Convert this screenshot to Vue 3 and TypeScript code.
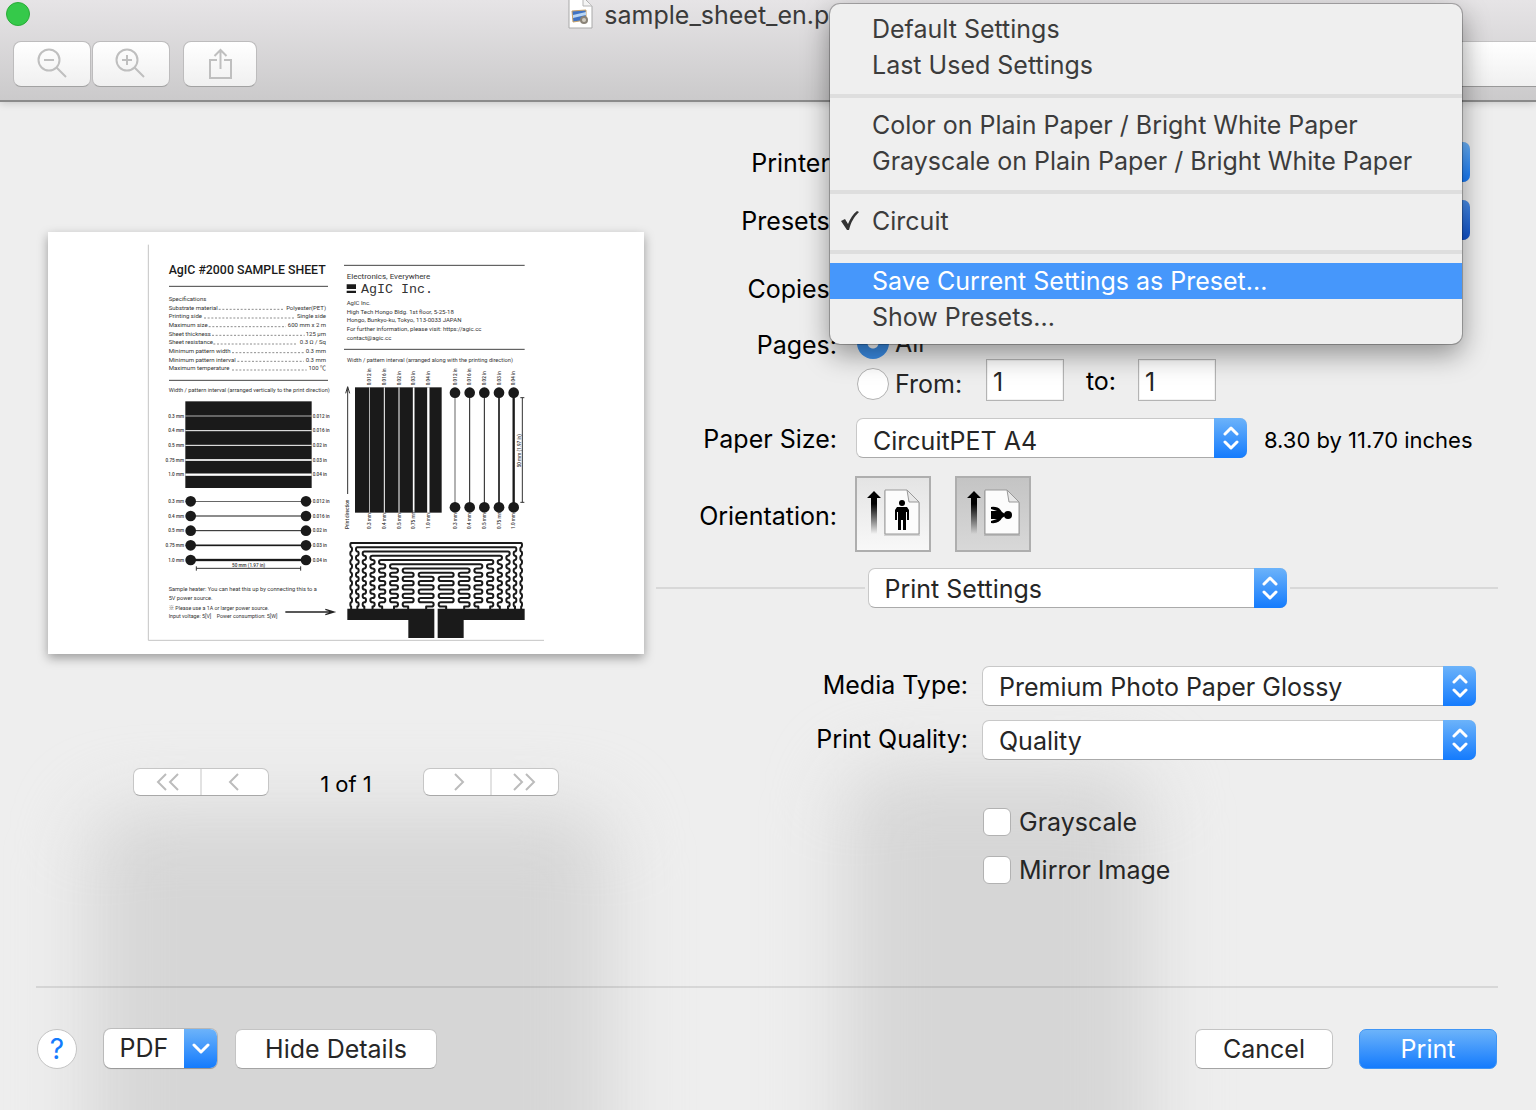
<script setup lang="ts">
import { ref } from 'vue'

interface MenuEntry {
  label: string
  checked?: boolean
  active?: boolean
}

const presetGroups: MenuEntry[][] = [
  [{ label: 'Default Settings' }, { label: 'Last Used Settings' }],
  [
    { label: 'Color on Plain Paper / Bright White Paper' },
    { label: 'Grayscale on Plain Paper / Bright White Paper' },
  ],
  [{ label: 'Circuit', checked: true }],
  [{ label: 'Save Current Settings as Preset...', active: true }, { label: 'Show Presets...' }],
]

const pageMode = ref('all')
const copies = ref('1')
const pageFrom = ref('1')
const pageTo = ref('1')
const orientation = ref('landscape')
const grayscale = ref(false)
const mirror = ref(false)

// Specification lines: label, leader start, leader end, value
const specs: [string, number, number, string][] = [
  ['Substrate material', 236, 434, 'Polyester(PET)'],
  ['Printing side', 192, 466, 'Single side'],
  ['Maximum size', 206, 438, '600 mm x 2 m'],
  ['Sheet thickness', 216, 494, '125 µm'],
  ['Sheet resistance', 220, 470, '0.3 Ω / Sq'],
  ['Minimum pattern width', 276, 492, '0.3 mm'],
  ['Minimum pattern interval', 292, 492, '0.3 mm'],
  ['Maximum temperature', 276, 500, '100 ℃'],
]

const address: string[] = [
  'AgIC Inc.',
  'High Tech Hongo Bldg. 1st floor, 5-25-18',
  'Hongo, Bunkyo-ku, Tokyo, 113-0033 JAPAN',
  'For further information, please visit: https://agic.cc',
  'contact@agic.cc',
]

const gauges = [
  { mm: '0.3 mm', inch: '0.012 in', w: 2 },
  { mm: '0.4 mm', inch: '0.016 in', w: 3 },
  { mm: '0.5 mm', inch: '0.02 in', w: 3 },
  { mm: '0.75 mm', inch: '0.03 in', w: 5 },
  { mm: '1.0 mm', inch: '0.04 in', w: 7 },
]

// Heater trace: nested loops whose legs are serpentines around the centre line
const legs: [number, number][] = [
  [61, 66], [78, 86], [98, 108], [121, 134], [147, 166], [180, 204], [218, 251], [266, 311],
]
const pitch = 12.7
const top = 519
const axis = 637

const traces = legs.map(([l, r], index) => {
  const rx = Math.min(pitch / 2, (r - l) / 2)
  const mid = (l + r) / 2
  const bends = 15 - index
  const edge = (b: number) => (b % 2 === 0 ? l + rx : r - rx)
  let d = `M${mid} 718V${top + pitch * 15}`
  for (let b = bends - 1; b >= 0; b--) {
    d += `H${edge(b)}a${rx} ${pitch / 2} 0 0 ${b % 2 === 0 ? 1 : 0} 0 ${-pitch}`
  }
  for (let b = 0; b < bends; b++) {
    d += `H${axis - edge(b)}a${rx} ${pitch / 2} 0 0 ${b % 2 === 0 ? 1 : 0} 0 ${pitch}`
  }
  return `${d}H${axis - mid}V718`
})
</script>

<template>
  <div class="window">
    <header class="titlebar">
      <div class="title-row">
        <button class="zoom-dot" type="button" aria-label="Full screen"></button>
        <div class="doc-title">
          <svg width="26" height="30" viewBox="0 0 26 30" aria-hidden="true">
            <path d="M1 -2H16L24 6V28H1Z" fill="#fff" stroke="#a9a9a9" />
            <path d="M15 -2V6H24" fill="#f4f4f4" stroke="#b5b5b5" />
            <path d="M4 11L18 10V20L5 22Z" fill="#3f73c4" stroke="#c9a268" />
            <path d="M5 15L18 12V15L5 18Z" fill="#b9d6f4" />
            <circle cx="16" cy="20" r="4" fill="#8a8378" />
            <circle cx="16" cy="20" r="2" fill="#d0cbc0" />
          </svg>
          <span>sample_sheet_en.pdf</span>
        </div>
      </div>
      <div class="tools">
        <div class="zoom-tools">
          <button class="tool" type="button" aria-label="Zoom out">
            <svg width="32" height="32" viewBox="0 0 32 32" fill="none" stroke="#bfbfbf" stroke-width="2">
              <circle cx="13" cy="12" r="10.500" /><path d="M8 12H18M20.500 19.500L30 29" />
            </svg>
          </button>
          <button class="tool" type="button" aria-label="Zoom in">
            <svg width="32" height="32" viewBox="0 0 32 32" fill="none" stroke="#bfbfbf" stroke-width="2">
              <circle cx="12" cy="12" r="10.500" /><path d="M7 12H17M12 7V17M19.500 19.500L29 29" />
            </svg>
          </button>
        </div>
        <button class="tool share" type="button" aria-label="Share">
          <svg width="24" height="32" viewBox="0 0 24 32" fill="none" stroke="#bfbfbf" stroke-width="2">
            <path d="M9 12H2V30H23V12H16M12.500 21V3M6.500 8L12.500 2L18.500 8" />
          </svg>
        </button>
        <input class="search" type="search" aria-label="Search" />
      </div>
    </header>

    <main class="dialog">
      <section class="preview">
        <div class="sheet">
          <svg viewBox="0 0 1788 1266" role="img" aria-label="Page preview">
            <path d="M301 38V1225H1488" fill="none" stroke="#c4c4c4" stroke-width="3" />
            <g transform="translate(276 24)">
              <text x="86" y="103" class="heading">AgIC #2000 SAMPLE SHEET</text>
              <path d="M87 139H564M87 421H564" class="rule" />
              <text x="86" y="183" class="body">Specifications</text>
              <g v-for="(s, i) in specs" :key="s[0]">
                <text x="86" :y="209 + i * 26" class="body">{{ s[0] }}</text>
                <path :d="`M${s[1]} ${208 + i * 26}H${s[2]}`" class="leader" />
                <text x="558" :y="209 + i * 26" class="body end">{{ s[3] }}</text>
              </g>
              <text x="86" y="457" class="caption">Width / pattern interval (arranged vertically to the print direction)</text>
            </g>

            <g transform="translate(846 24)">
              <path d="M42 76H584M42 328H584" class="rule" />
              <text x="50" y="116" class="tagline">Electronics, Everywhere</text>
              <path d="M50 133H78V147H50ZM50 152H78V159H50Z" fill="#1a1a1a" />
              <text x="93" y="160" class="brand">AgIC Inc.</text>
              <text v-for="(line, i) in address" :key="line" x="50" :y="195 + i * 26" class="body">{{ line }}</text>
              <text x="51" y="365" class="caption">Width / pattern interval (arranged along with the printing direction)</text>
            </g>

            <g transform="translate(276 474)">
              <rect x="136" y="34" width="379" height="260" fill="#1a1a1a" />
              <g v-for="(g, i) in gauges" :key="g.mm">
                <rect x="136" :y="78 + i * 44 - g.w / 2" width="379" :height="g.w" fill="#fff" />
                <text x="132" :y="83 + i * 44" class="tag end">{{ g.mm }}</text>
                <text x="518" :y="83 + i * 44" class="tag">{{ g.inch }}</text>
                <rect x="152" :y="334 + i * 44 - g.w / 2" width="345" :height="g.w" fill="#1a1a1a" />
                <circle cx="152" :cy="334 + i * 44" r="16" fill="#1a1a1a" />
                <circle cx="498" :cy="334 + i * 44" r="16" fill="#1a1a1a" />
                <text x="132" :y="339 + i * 44" class="tag end">{{ g.mm }}</text>
                <text x="518" :y="339 + i * 44" class="tag">{{ g.inch }}</text>
              </g>
              <path d="M169 535H482M169 529V542M482 529V542" class="thin" />
              <text x="326" y="530" class="tag mid">50 mm (1.97 in)</text>
              <text x="86" y="603" class="caption">Sample heater: You can heat this up by connecting this to a</text>
              <text x="86" y="629" class="caption">5V power source.</text>
              <text x="86" y="660" class="note">※ Please use a 1A or larger power source.</text>
              <text x="86" y="685" class="note">Input voltage: 5[V]</text>
              <text x="230" y="685" class="note">Power consumption: 5[W]</text>
              <path d="M436 666H582M556 658L582 666L556 674" class="arrow" />
            </g>

            <g transform="translate(846 414)">
              <path d="M53 372V52M47 70L53 50L59 70" class="thin" />
              <text transform="translate(58 477) rotate(-90)" class="tag">Print direction</text>
              <rect x="75" y="52" width="260" height="376" fill="#1a1a1a" />
              <g v-for="(g, i) in gauges" :key="g.inch">
                <rect :x="119 + i * 44 - g.w / 2" y="52" :width="g.w" height="376" fill="#fff" />
                <text :transform="`translate(${124 + i * 44} 46) rotate(-90)`" class="tag">{{ g.inch }}</text>
                <text :transform="`translate(${124 + i * 44} 477) rotate(-90)`" class="tag">{{ g.mm }}</text>
                <rect :x="375 + i * 44 - g.w / 2" y="68" :width="g.w" height="344" fill="#1a1a1a" />
                <circle :cx="375 + i * 44" cy="68" r="16" fill="#1a1a1a" />
                <circle :cx="375 + i * 44" cy="412" r="16" fill="#1a1a1a" />
                <text :transform="`translate(${380 + i * 44} 46) rotate(-90)`" class="tag">{{ g.inch }}</text>
                <text :transform="`translate(${380 + i * 44} 477) rotate(-90)`" class="tag">{{ g.mm }}</text>
              </g>
              <path d="M577 83V397M571 83H583M571 397H583" class="thin" />
              <text transform="translate(572 292) rotate(-90)" class="tag">50 mm (1.97 in)</text>
              <path v-for="(d, i) in traces" :key="i" :d="d" class="trace" />
              <path d="M52 716H313V804H235V750H52ZM323 716H584V750H401V804H323Z" fill="#1a1a1a" />
            </g>
          </svg>
        </div>
        <nav class="pager" aria-label="Pages">
          <div class="segments">
            <button type="button" aria-label="First page">
              <svg width="24" height="20" viewBox="0 0 24 20"><path d="M11 2L3 10L11 18M23 2L15 10L23 18" /></svg>
            </button>
            <button type="button" aria-label="Previous page">
              <svg width="24" height="20" viewBox="0 0 24 20"><path d="M15 2L7 10L15 18" /></svg>
            </button>
          </div>
          <span class="page-count">1 of 1</span>
          <div class="segments">
            <button type="button" aria-label="Next page">
              <svg width="24" height="20" viewBox="0 0 24 20"><path d="M10 2L18 10L10 18" /></svg>
            </button>
            <button type="button" aria-label="Last page">
              <svg width="24" height="20" viewBox="0 0 24 20"><path d="M1 2L9 10L1 18M13 2L21 10L13 18" /></svg>
            </button>
          </div>
        </nav>
      </section>

      <form class="options" @submit.prevent>
        <div class="row">
          <label for="printer">Printer:</label>
          <div class="popup wide">
            <select id="printer"><option></option></select>
            <span class="stepper"></span>
          </div>
        </div>
        <div class="row presets">
          <label for="presets">Presets:</label>
          <div class="anchor">
            <div class="popup wide dim">
              <select id="presets"><option></option></select>
              <span class="stepper"></span>
            </div>
            <div class="menu" role="menu">
              <template v-for="(group, gi) in presetGroups" :key="gi">
                <hr v-if="gi > 0" />
                <button
                  v-for="item in group"
                  :key="item.label"
                  type="button"
                  role="menuitem"
                  :class="{ active: item.active }"
                >
                  <span class="mark">
                    <svg v-if="item.checked" width="20" height="22" viewBox="0 0 20 22" aria-hidden="true">
                      <path d="M1 11L5 9L8 14C10 9 13 4 17 1L19 2C14 7 11 12 9 20H7Z" fill="#333" />
                    </svg>
                  </span>
                  <span>{{ item.label }}</span>
                </button>
              </template>
            </div>
          </div>
        </div>
        <div class="row copies">
          <label for="copies">Copies:</label>
          <div><input id="copies" v-model="copies" class="number" type="text" /></div>
        </div>
        <div class="row pages">
          <span class="row-label">Pages:</span>
          <div class="page-range">
            <label class="choice"><input v-model="pageMode" type="radio" value="all" />All</label>
            <div class="range">
              <label class="choice"><input v-model="pageMode" type="radio" value="range" />From:</label>
              <input v-model="pageFrom" class="number" type="text" aria-label="From page" />
              <label class="to" for="page-to">to:</label>
              <input id="page-to" v-model="pageTo" class="number" type="text" />
            </div>
          </div>
        </div>
        <div class="row paper">
          <label for="paper">Paper Size:</label>
          <div class="inline">
            <div class="popup paper-size">
              <select id="paper"><option>CircuitPET A4</option></select>
              <span class="stepper">
                <svg width="16" height="26" viewBox="0 0 16 26"><path d="M2 9L8 3L14 9M2 17L8 23L14 17" /></svg>
              </span>
            </div>
            <span class="dimensions">8.30 by 11.70 inches</span>
          </div>
        </div>
        <div class="row orient">
          <span class="row-label">Orientation:</span>
          <div class="orientations">
            <button type="button" aria-label="Portrait" :class="{ on: orientation === 'portrait' }" @click="orientation = 'portrait'">
              <svg width="72" height="72" viewBox="0 0 72 72" aria-hidden="true">
                <defs>
                  <linearGradient id="fade" x1="0" y1="0" x2="0" y2="1">
                    <stop offset="0.300" stop-color="#000" />
                    <stop offset="1" stop-color="#000" stop-opacity="0" />
                  </linearGradient>
                </defs>
                <path d="M17 13L24 20H20V56H14V20H10Z" fill="url(#fade)" />
                <path d="M27 13H50L63 25V58H27Z" fill="#00000022" />
                <path d="M28 12H50L62 24V56H28Z" fill="#fcfcfc" stroke="#999" />
                <path d="M50 12L62 24H52Z" fill="#e8e8e8" stroke="#999" />
                <circle cx="45" cy="25" r="3" />
                <path d="M40 29H50L52 32V42H50V34H49V52H46V42H44V52H41V34H40V42H38V32Z" />
              </svg>
            </button>
            <button type="button" aria-label="Landscape" :class="{ on: orientation === 'landscape' }" @click="orientation = 'landscape'">
              <svg width="72" height="72" viewBox="0 0 72 72" aria-hidden="true">
                <path d="M17 13L24 20H20V56H14V20H10Z" fill="url(#fade)" />
                <path d="M27 13H50L63 25V58H27Z" fill="#00000022" />
                <path d="M28 12H50L62 24V56H28Z" fill="#fcfcfc" stroke="#999" />
                <path d="M50 12L62 24H52Z" fill="#e8e8e8" stroke="#999" />
                <circle cx="51" cy="37" r="4" />
                <path d="M34 29Q42 28 45 34L48 36V38L45 40Q42 46 34 45V43L40 41H34V33H40L34 31Z" />
              </svg>
            </button>
          </div>
        </div>

        <div class="section">
          <div class="popup section-select">
            <select aria-label="Settings group"><option>Print Settings</option></select>
            <span class="stepper">
              <svg width="16" height="26" viewBox="0 0 16 26"><path d="M2 9L8 3L14 9M2 17L8 23L14 17" /></svg>
            </span>
          </div>
        </div>

        <div class="settings">
          <label for="media">Media Type:</label>
          <div class="popup">
            <select id="media"><option>Premium Photo Paper Glossy</option></select>
            <span class="stepper">
              <svg width="16" height="26" viewBox="0 0 16 26"><path d="M2 9L8 3L14 9M2 17L8 23L14 17" /></svg>
            </span>
          </div>
          <label for="quality">Print Quality:</label>
          <div class="popup">
            <select id="quality"><option>Quality</option></select>
            <span class="stepper">
              <svg width="16" height="26" viewBox="0 0 16 26"><path d="M2 9L8 3L14 9M2 17L8 23L14 17" /></svg>
            </span>
          </div>
          <div class="checks">
            <label class="choice"><input v-model="grayscale" type="checkbox" />Grayscale</label>
            <label class="choice"><input v-model="mirror" type="checkbox" />Mirror Image</label>
          </div>
        </div>
      </form>
    </main>

    <footer class="actions">
      <button class="help" type="button" aria-label="Help">?</button>
      <button class="pdf" type="button">
        <span class="pdf-text">PDF</span>
        <span class="pdf-arrow">
          <svg width="18" height="12" viewBox="0 0 18 12" aria-hidden="true"><path d="M2 2L9 9L16 2" /></svg>
        </span>
      </button>
      <button class="push details" type="button">Hide Details</button>
      <button class="push cancel" type="button">Cancel</button>
      <button class="push print" type="button">Print</button>
    </footer>
  </div>
</template>

<style>
body {
  background: #eee;
}
</style>

<style scoped>
.window {
  position: relative;
  isolation: isolate;
  overflow: hidden;
  box-sizing: border-box;
  min-height: 100vh;
  background: #eee;
  color: #000;
  font-family: Inter, Roboto, "Liberation Sans", sans-serif;
  font-size: 25px;
  font-weight: 400;
  font-optical-sizing: none;
  line-height: 36px;
}
/* soft shapes showing through the translucent sheet */
.window::before,
.window::after {
  content: "";
  position: absolute;
  z-index: -1;
  top: 810px;
  bottom: -120px;
  left: 90px;
  width: 520px;
  border-radius: 40px;
  background: #d6d6d6;
  filter: blur(36px);
}
.window::after {
  top: 770px;
  left: 845px;
  width: 305px;
}
button, input, select {
  font: inherit;
  font-optical-sizing: none;
  color: inherit;
  margin: 0;
}
button {
  padding: 0;
  border: 0;
}

.titlebar {
  box-sizing: border-box;
  height: 102px;
  border-bottom: 2px solid #8a8a8a;
  background: linear-gradient(#e6e4e6, #cbcacb);
  box-shadow: 0 1px 8px #0000002e;
}
.title-row {
  position: relative;
  display: flex;
  align-items: flex-start;
  height: 41px;
}
.zoom-dot {
  width: 24px;
  height: 24px;
  margin: 2px 0 0 6px;
  border: 1px solid #2aac38;
  border-radius: 50%;
  background: #35c94a;
}
.doc-title {
  position: absolute;
  left: 37%;
  top: 0;
  display: flex;
  gap: 10px;
  color: #3a3a3a;
  line-height: 30px;
  white-space: nowrap;
}
.tools {
  display: flex;
  padding-left: 13px;
}
.zoom-tools {
  display: flex;
  gap: 1px;
  margin-right: 13px;
}
.tool {
  display: flex;
  flex: none;
  align-items: center;
  justify-content: center;
  box-sizing: border-box;
  width: 78px;
  height: 46px;
  border: 1px solid #bdbcbd;
  border-bottom-color: #a2a2a2;
  border-radius: 8px;
  background: linear-gradient(#fff, #f0f0f0);
}
.share {
  width: 74px;
}
.search {
  box-sizing: border-box;
  flex: 1;
  min-width: 0;
  height: 46px;
  margin-left: 900px;
  border: 1px solid #c4c3c4;
  border-right: 0;
  border-bottom-color: #999;
  border-radius: 8px 0 0 8px;
  background: linear-gradient(#fff, #f0f0f0);
}

.dialog {
  display: grid;
  grid-template-columns: minmax(0, 596fr) minmax(0, 842fr);
  gap: 12px;
  padding: 40px 38px 102px 48px;
}
.preview {
  padding-top: 90px;
}
.sheet {
  background: #fff;
  box-shadow: 0 4px 10px #00000059;
}
.sheet svg {
  display: block;
  width: 100%;
  font-family: Roboto, "Noto Sans CJK JP", sans-serif;
  fill: #333;
}
.heading { font-size: 37px; font-weight: 500; fill: #1a1a1a; }
.body { font-size: 18px; }
.caption { font-size: 17px; }
.note { font-size: 16px; }
.tag { font-size: 14px; font-weight: 500; }
.tagline { font-size: 24px; }
.brand { font-size: 40px; font-family: "Liberation Mono", "DejaVu Serif", monospace; }
.end { text-anchor: end; }
.mid { text-anchor: middle; }
.rule { fill: none; stroke: #444; stroke-width: 3; }
.leader { fill: none; stroke: #555; stroke-width: 2; stroke-dasharray: 6 5; }
.thin { fill: none; stroke: #333; stroke-width: 3; }
.arrow { fill: none; stroke: #222; stroke-width: 4; }
.trace {
  fill: none;
  stroke: #1a1a1a;
  stroke-width: 6;
  stroke-linejoin: round;
}

.pager {
  display: flex;
  justify-content: center;
  margin-top: 114px;
}
.segments {
  display: flex;
  box-sizing: border-box;
  width: 136px;
  height: 28px;
  overflow: hidden;
  border: 1px solid #c6c6c6;
  border-bottom-color: #a8a8a8;
  border-radius: 7px;
  background: #fff;
}
.segments button {
  display: flex;
  flex: 1;
  align-items: center;
  justify-content: center;
  background: transparent;
}
.segments button + button {
  border-left: 2px solid #e2e2e2;
}
.segments path {
  fill: none;
  stroke: #bcbcbc;
  stroke-width: 2;
}
.page-count {
  width: 154px;
  font-size: 22px;
  line-height: 32px;
  text-align: center;
}

.row {
  display: grid;
  grid-template-columns: 181px minmax(0, 1fr);
  column-gap: 18px;
  line-height: 42px;
}
.row > label,
.row-label {
  text-align: right;
}
.presets {
  margin-top: 16px;
}
.copies {
  margin-top: 26px;
}
.pages {
  margin-top: 17px;
  line-height: 36px;
}
.paper {
  margin-top: 17px;
}
.orient {
  height: 76px;
  margin-top: 16px;
  line-height: 80px;
}
.popup {
  position: relative;
  height: 40px;
  color: #262626;
}
.wide {
  margin-right: 28px;
}
.popup select {
  display: block;
  box-sizing: border-box;
  width: 100%;
  height: 40px;
  padding: 1px 40px 0 16px;
  appearance: none;
  border: 1px solid #c8c8c8;
  border-bottom-color: #aaa;
  border-radius: 7px;
  background: #fff;
}
.stepper {
  position: absolute;
  top: 0;
  right: 0;
  display: flex;
  align-items: center;
  justify-content: center;
  width: 33px;
  height: 40px;
  border-radius: 0 7px 7px 0;
  background: linear-gradient(#6cb3fa, #147bfd);
  pointer-events: none;
}
.dim .stepper {
  background: linear-gradient(#4a90ec, #0d50cc);
}
.stepper path,
.pdf-arrow path {
  fill: none;
  stroke: #fff;
  stroke-width: 3;
  stroke-linecap: round;
  stroke-linejoin: round;
}
.anchor {
  position: relative;
}
.menu {
  position: absolute;
  z-index: 2;
  top: -196px;
  right: 36px;
  left: -25px;
  padding: 7px 0 9px;
  overflow: hidden;
  border-radius: 10px;
  background: #efefef;
  box-shadow: 0 0 0 1px #00000040, 0 10px 28px #00000066;
  line-height: 36px;
}
.menu hr {
  height: 4px;
  margin: 11px 0 9px;
  border: 0;
  background: #dedede;
}
.menu button {
  display: flex;
  width: 100%;
  height: 36px;
  background: transparent;
  color: #3c3c3c;
  text-align: left;
  white-space: nowrap;
}
.menu .active {
  background: #4697fb;
  color: #fff;
}
.mark {
  display: flex;
  align-items: center;
  flex: none;
  box-sizing: border-box;
  width: 42px;
  padding-left: 10px;
}
.number {
  display: block;
  box-sizing: border-box;
  width: 78px;
  height: 42px;
  padding: 4px 0 0 6px;
  border: 1px solid #b4b4b4;
  border-radius: 0;
  background: #fff;
  box-shadow: inset 0 0 0 1px #f2f2f2;
  color: #262626;
}
.choice {
  display: flex;
  align-items: center;
  color: #262626;
}
.page-range .choice {
  gap: 6px;
  padding-left: 2px;
  line-height: 32px;
}
.choice input {
  box-sizing: border-box;
  flex: none;
  appearance: none;
  border: 1px solid #b2b2b2;
  background: #fff;
}
.choice input[type="radio"] {
  width: 32px;
  height: 32px;
  border-radius: 50%;
}
.choice input[type="radio"]:checked {
  border: 0;
  background: radial-gradient(circle, #fff 5px, #3b8ee8 6px);
}
.choice input[type="checkbox"] {
  width: 28px;
  height: 28px;
  border-radius: 6px;
}
.choice input[type="checkbox"]:checked {
  background: #147bfd;
}
.range {
  display: flex;
  height: 42px;
}
.range .choice {
  width: 129px;
  height: 50px;
}
.to {
  width: 74px;
  line-height: 44px;
  text-align: center;
}
.inline {
  display: flex;
  height: 40px;
}
.paper-size {
  width: 391px;
  margin-left: 1px;
}
.dimensions {
  margin-left: 17px;
  font-size: 22px;
  line-height: 44px;
  white-space: nowrap;
}
.orientations {
  display: flex;
  gap: 24px;
}
.orientations button {
  box-sizing: border-box;
  width: 76px;
  height: 76px;
  border: 2px solid #aeaeae;
  background: linear-gradient(#e4e4e4, #f8f8f8);
}
.orientations .on {
  background: linear-gradient(#c4c4c4, #d8d8d8);
}
.orientations svg {
  display: block;
}
.section {
  display: flex;
  align-items: center;
  gap: 3px;
  margin-top: 16px;
}
.section::before,
.section::after {
  content: "";
  flex: 1;
  height: 2px;
  background: #d8d8d8;
}
.section-select {
  width: 419px;
}
.settings {
  display: grid;
  grid-template-columns: 312px minmax(0, 1fr);
  gap: 14px;
  padding: 58px 22px 0 0;
  line-height: 38px;
}
.settings > label {
  text-align: right;
}
.checks {
  display: grid;
  grid-column: 2;
  gap: 20px;
  margin-top: 34px;
  padding-left: 1px;
}
.checks .choice {
  gap: 8px;
  height: 28px;
}

.actions {
  display: flex;
  align-items: flex-start;
  margin: 0 38px 0 36px;
  padding: 41px 1px;
  border-top: 2px solid #00000018;
  color: #262626;
  line-height: 38px;
}
.help {
  box-sizing: border-box;
  width: 40px;
  height: 40px;
  margin-right: 27px;
  border: 1px solid #c4c4c4;
  border-radius: 50%;
  background: #fff;
  color: #147bfd;
  font-size: 28px;
}
.pdf {
  display: flex;
  width: 113px;
  height: 39px;
  margin-right: 18px;
  overflow: hidden;
  border-radius: 7px;
  background: #fff;
  box-shadow: 0 0 0 1px #00000024, 0 1px 1px #00000033;
}
.pdf-text {
  flex: 1;
  line-height: 39px;
}
.pdf-arrow {
  display: flex;
  align-items: center;
  justify-content: center;
  width: 33px;
  height: 39px;
  background: linear-gradient(#6cb3fa, #147bfd);
}
.push {
  box-sizing: border-box;
  width: 138px;
  height: 40px;
  border: 1px solid #c4c4c4;
  border-bottom-color: #a4a4a4;
  border-radius: 7px;
  background: #fff;
}
.details {
  width: 202px;
}
.cancel {
  margin-left: auto;
}
.print {
  margin-left: 26px;
  border-color: #3f95f5;
  background: linear-gradient(#6cb3fa, #147bfd);
  color: #fff;
}
</style>
